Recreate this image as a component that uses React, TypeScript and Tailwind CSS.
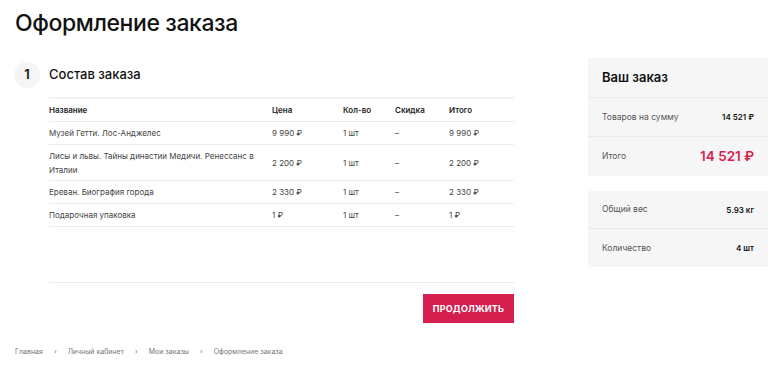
import React from "react";

const rows = [
  { name: "Музей Гетти. Лос-Анджелес", price: "9 990 ₽", qty: "1 шт", disc: "–", total: "9 990 ₽", tall: false },
  { name: "Лисы и львы. Тайны династии Медичи. Ренессанс в Италии", price: "2 200 ₽", qty: "1 шт", disc: "–", total: "2 200 ₽", tall: true },
  { name: "Ереван. Биография города", price: "2 330 ₽", qty: "1 шт", disc: "–", total: "2 330 ₽", tall: false },
  { name: "Подарочная упаковка", price: "1 ₽", qty: "1 шт", disc: "–", total: "1 ₽", tall: false },
];

const grid = "grid grid-cols-[223px_71px_52px_54px_65px] items-center";

export default function App() {
  return (
    <div className="w-[780px] h-[367px] bg-white text-[#111] font-['Inter',sans-serif] pl-[15px] pt-[7px] overflow-hidden">
      <h1 className="text-[23px] leading-[32px] font-medium tracking-[-0.4px]">Оформление заказа</h1>
      <div className="flex mt-[19px]">
        <div className="w-[499px]">
          <div className="flex items-center h-[34px] -ml-[1px]">
            <div className="w-[26px] h-[26px] rounded-full bg-[#f5f5f5] flex items-center justify-center text-[13px] font-semibold">1</div>
            <div className="ml-[9px] text-[13px] font-medium">Состав заказа</div>
          </div>
          <div className="ml-[34px] w-[465px] mt-[5px] border-t-2 border-[#f2f2f2]">
            <div className={`${grid} h-[23px] border-b border-[#ececec] text-[8px] font-semibold text-[#222]`}>
              <div>Название</div>
              <div>Цена</div>
              <div>Кол-во</div>
              <div>Скидка</div>
              <div>Итого</div>
            </div>
            {rows.map((r, i) => (
              <div key={i} className={`${grid} ${r.tall ? "h-[36px]" : "h-[23px]"} border-b border-[#ececec] text-[8px] text-[#444]`}>
                <div className="pr-[8px] leading-[14px]">{r.name}</div>
                <div>{r.price}</div>
                <div>{r.qty}</div>
                <div>{r.disc}</div>
                <div>{r.total}</div>
              </div>
            ))}
            <div className="h-[56px] border-b border-[#ececec]" />
            <div className="flex justify-end mt-[11px]">
              <button className="w-[91px] h-[29px] bg-[#d41f4f] text-white text-[9px] font-bold tracking-[0.2px]">ПРОДОЛЖИТЬ</button>
            </div>
          </div>
        </div>
        <div className="ml-[74px] w-[180px]">
          <div className="bg-[#f6f6f6]">
            <div className="h-[40px] px-[14px] flex items-center border-b border-[#ebebeb] text-[13px] font-semibold">Ваш заказ</div>
            <div className="h-[39px] px-[14px] flex items-center justify-between border-b border-[#ebebeb]">
              <span className="text-[8.5px] text-[#555]">Товаров на сумму</span>
              <span className="text-[8px] font-semibold">14 521 ₽</span>
            </div>
            <div className="h-[39px] px-[14px] flex items-center justify-between">
              <span className="text-[8.5px] text-[#555]">Итого</span>
              <span className="text-[13.5px] font-semibold text-[#d41f4f]">14 521 ₽</span>
            </div>
          </div>
          <div className="bg-[#f6f6f6] mt-[15px]">
            <div className="h-[38px] px-[14px] flex items-center justify-between border-b border-[#ebebeb]">
              <span className="text-[8.5px] text-[#555]">Общий вес</span>
              <span className="text-[8px] font-semibold">5.93 кг</span>
            </div>
            <div className="h-[38px] px-[14px] flex items-center justify-between">
              <span className="text-[8.5px] text-[#555]">Количество</span>
              <span className="text-[8px] font-semibold">4 шт</span>
            </div>
          </div>
        </div>
      </div>
      <div className="flex items-center mt-[23px] text-[7px] text-[#777] h-[12px]">
        <span>Главная</span>
        <span className="mx-[11px]">›</span>
        <span>Личный кабинет</span>
        <span className="mx-[11px]">›</span>
        <span>Мои заказы</span>
        <span className="mx-[11px]">›</span>
        <span>Оформление заказа</span>
      </div>
    </div>
  );
}
